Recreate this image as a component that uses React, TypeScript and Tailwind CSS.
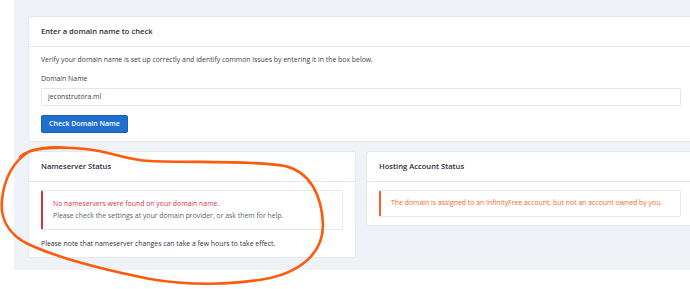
import React from 'react';

const font = { fontFamily: '"Open Sans", "Noto Sans", sans-serif' };

function Card({ title, children }: { title: string; children: React.ReactNode }) {
  return (
    <div className="bg-white border border-[#e3e7ee] rounded-[3px]">
      <div className="h-[30px] px-3 flex items-center border-b border-[#e3e7ee] text-[7.6px] font-semibold text-[#2a2f3a]">
        {title}
      </div>
      <div className="px-3 pt-2 pb-2">{children}</div>
    </div>
  );
}

export default function App() {
  return (
    <div className="relative w-[690px] h-[289px] bg-white overflow-hidden" style={font}>
      <div className="ml-[14px] h-[270px] bg-[#eff2f7] pt-4 pl-[14px]">
        <div className="w-[666px]">
          <Card title="Enter a domain name to check">
            <p className="text-[6.9px] leading-[10px] text-[#3a3f4a]">
              Verify your domain name is set up correctly and identify common issues by entering it in the box below.
            </p>
            <label className="block mt-[9px] text-[6.9px] leading-[10px] text-[#3a3f4a]">Domain Name</label>
            <div className="mt-1 h-[18px] border border-[#e3e6ea] rounded-[2px] flex items-center px-[6px] text-[6.9px] text-[#3a3f4a]">
              jeconstrutora.ml
            </div>
            <button className="mt-[9px] h-[18px] px-[7px] bg-[#1f6fd1] border border-[#1a5fb4] rounded-[2px] text-white text-[7px] font-semibold">
              Check Domain Name
            </button>
          </Card>

          <div className="mt-[9px] grid grid-cols-2 gap-[10px] items-start">
            <Card title="Nameserver Status">
              <div className="border border-[#e6e9ee] border-l-2 border-l-[#d0343f] rounded-[2px] px-[10px] py-[7px] text-[6.9px] leading-[12px]">
                <div className="text-[#d6334a]">No nameservers were found on your domain name.</div>
                <div className="text-[#5a5f6a]">Please check the settings at your domain provider, or ask them for help.</div>
              </div>
              <p className="mt-[9px] text-[6.9px] leading-[10px] text-[#2f343e]">
                Please note that nameserver changes can take a few hours to take effect.
              </p>
            </Card>
            <Card title="Hosting Account Status">
              <div className="border border-[#e6e9ee] border-l-2 border-l-[#f26522] rounded-[2px] px-[10px] h-[27px] flex items-center text-[6.9px] text-[#f26a2e]">
                The domain is assigned to an InfinityFree account, but not an account owned by you.
              </div>
            </Card>
          </div>
        </div>
      </div>

      <svg className="absolute left-0 top-0 pointer-events-none" width="690" height="289" viewBox="0 0 690 289">
        <path
          d="M20 157 C28 148 55 146 85 149 C110 151 125 160 150 161 C190 163 250 160 285 166 C310 172 322 195 323 225 C323 250 305 270 270 278 C235 285 190 286 150 279 C110 271 60 259 28 244 C8 234 0 218 2 200 C4 180 12 162 30 151 C45 146 60 147 70 148"
          fill="none"
          stroke="#ff5a0a"
          strokeWidth="2.6"
          strokeLinecap="round"
        />
      </svg>
    </div>
  );
}
